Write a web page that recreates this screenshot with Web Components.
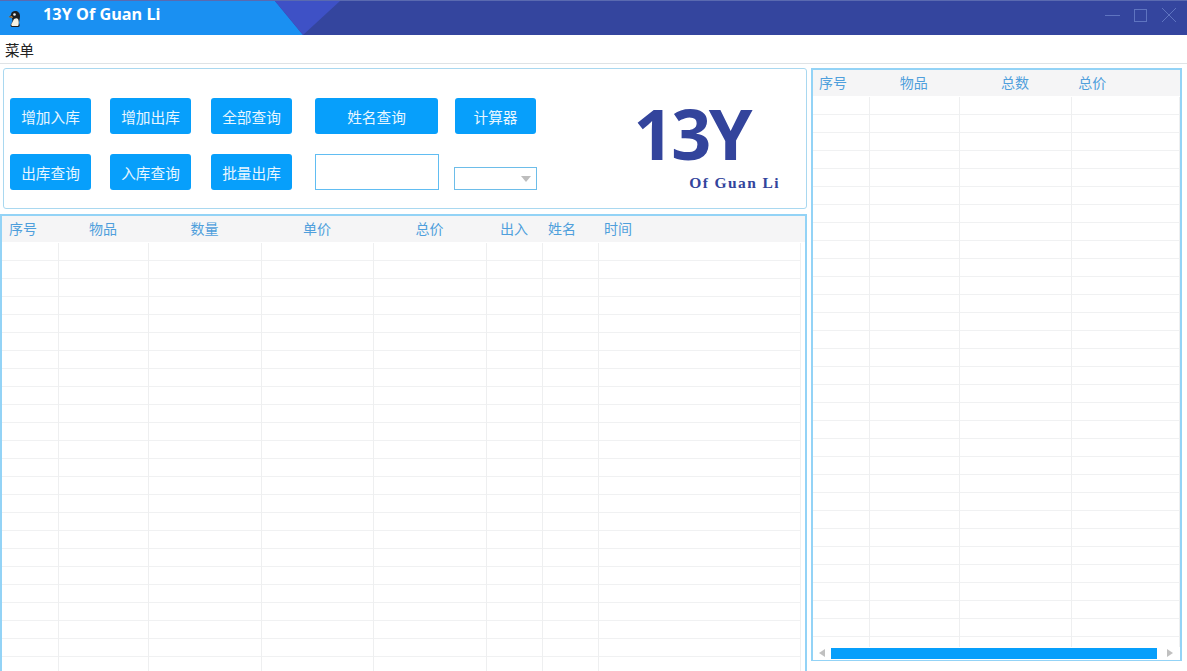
<!DOCTYPE html>
<html lang="zh"><head><meta charset="utf-8"><title>13Y Of Guan Li</title>
<style>
html,body{margin:0;padding:0;height:100%;overflow:hidden;background:#fff}
body{width:1187px;height:671px;font-family:"Noto Sans CJK SC","Noto Sans",sans-serif;display:flex;flex-direction:column}
.main{flex:1;display:flex;min-height:0;padding-top:4px;background:#fff}
.left{width:807px;height:603px;overflow:hidden;display:flex;flex-direction:column;gap:5px;margin-right:4px}
.right{width:371px;height:593px;border-bottom-width:1px}
.lg{flex:none;height:470px;border-bottom:0}
</style></head><body>
<title-bar></title-bar>
<menu-bar>菜单</menu-bar>
<div class="main">
  <div class="left">
    <tool-panel></tool-panel>
    <data-grid class="lg" cols="57:7,90:c,113:c,112:c,113:c,56:c,56:5,202:5" labels="序号,物品,数量,单价,总价,出入,姓名,时间" rows="24" fit></data-grid>
  </div>
  <data-grid class="right" cols="57:6,90:c,113:c,108:6" labels="序号,物品,总数,总价" rows="32" scroll></data-grid>
</div>
<script>
const def=(n,html,extra={})=>customElements.define(n,class extends HTMLElement{
  constructor(){super();this.attachShadow({mode:'open'}).innerHTML=html}
  connectedCallback(){extra.ready&&extra.ready.call(this)}
});
def('title-bar',`<style>
:host{display:flex;align-items:center;height:34px;border-top:1px solid #5a6ab0;box-sizing:content-box;background:#34459e;color:#fff;position:relative;overflow:hidden}
.bg{position:absolute;inset:0}
.ic{position:relative;width:14px;height:18px;margin:1px 0 0 8px}
.t{position:relative;margin-left:21px;font:700 16.300px/24px "Noto Sans",sans-serif;margin-top:-8px}
.w{position:absolute;right:10px;top:6px;display:flex;gap:13px}
svg{display:block}
</style>
<svg class="bg" width="1187" height="34"><polygon points="0,0 275,0 303,34 0,34" fill="#1a90f2"/><polygon points="275,0 340,0 303,34" fill="#3e51c6"/></svg>
<svg class="ic" viewBox="0 0 14 18"><path d="M3 5C3 2 5 1 7 1c3 0 5 2 5 5 0 3-1 5-1 7 1 2 1 4-1 4H4c-1 0-2-1-1-3 1-1 2-3 1-6L1 7z" fill="#1d2022"/><path d="M6 9c2-1 3-1 4 0 1 2 1 6 0 7H4c-1-1-1-2 0-3z" fill="#f4f2e4"/><circle cx="6.500" cy="4.500" r="1.300" fill="#eee"/><path d="M0 7l4-1 1 2z" fill="#c58b45"/></svg>
<span class="t">13Y Of Guan Li</span>
<div class="w">
<svg width="15" height="15" fill="none" stroke="#5f74c0"><path d="M0 8.500h15"/></svg>
<svg width="15" height="15" fill="none" stroke="#5f74c0"><rect x="1.500" y="2.500" width="12" height="12"/></svg>
<svg width="16" height="15" fill="none" stroke="#5f74c0"><path d="M1 1l14 14M15 1L1 15"/></svg>
</div>`);
def('menu-bar',`<style>:host{display:flex;align-items:center;height:27px;border-bottom:1px solid #dfe3e6;padding:1px 0 0 5px;font-size:14.500px;color:#222;box-sizing:content-box}</style><slot></slot>`);
def('tool-btn',`<style>:host{display:flex;align-items:center;justify-content:center;height:36px;background:#079ffb;color:#e8f6ff;border-radius:3px;font-size:14.670px}</style><slot></slot>`);
def('text-box',`<style>:host{display:block;box-sizing:border-box;height:36px;border:1px solid #61bdf2;background:#fff}</style>`);
def('combo-box',`<style>:host{display:flex;align-items:center;justify-content:flex-end;box-sizing:border-box;height:23px;border:1px solid #6dbde9;background:#fff;padding-right:5px}i{border:5px solid transparent;border-top:6px solid #bdbdbd;border-bottom:0}</style><i></i>`);
def('tool-panel',`<style>
:host{display:flex;flex:none;box-sizing:border-box;height:141px;margin-left:3px;border:1px solid #a9d8f0;border-radius:3px;background:#fff;padding-top:29px;padding-left:6px;position:relative}
.c{display:flex;flex-direction:column;gap:20px}
tool-btn{width:81px}
.logo{flex:1;display:flex;flex-direction:column;align-items:flex-end;color:#33449c}
.n{font:700 70px/60px "Noto Sans",sans-serif;letter-spacing:-2.500px;margin:5px 56px 0 0}
.s{font:700 15.500px/16px "Liberation Serif",serif;letter-spacing:1.400px;margin:12px 26px 0 0}
</style>
<div class="c"><tool-btn>增加入库</tool-btn><tool-btn>出库查询</tool-btn></div>
<div class="c" style="margin-left:19px"><tool-btn>增加出库</tool-btn><tool-btn>入库查询</tool-btn></div>
<div class="c" style="margin-left:20px"><tool-btn>全部查询</tool-btn><tool-btn>批量出库</tool-btn></div>
<div class="c" style="margin-left:23px;width:124px"><tool-btn style="width:123px">姓名查询</tool-btn><text-box></text-box></div>
<div class="c" style="margin-left:15px;width:83px"><tool-btn style="width:81px;margin-left:1px">计算器</tool-btn><combo-box style="margin-top:13px"></combo-box></div>
<div class="logo"><div class="n">13Y</div><div class="s">Of Guan Li</div></div>`);
def('data-grid',`<style>
:host{display:block;box-sizing:border-box;border:2px solid #93d3f6;background:#fff;overflow:hidden;position:relative;font-size:14px}
.h,.r{display:flex}
.h{height:26px;background:#f5f5f6;color:#4f9fdc;align-items:center}
.h div{box-sizing:border-box;white-space:nowrap;margin-top:-3px}
.b{padding-top:1px}
.r{height:18px;box-sizing:border-box;border-bottom:1px solid #f0f1f2}
:host([fit]) .r{width:max-content}
.r div{box-sizing:border-box;border-right:1px solid #eeeff0;height:18px}
.sb{position:absolute;left:0;right:0;bottom:0;height:13px;background:#fff}
.th{position:absolute;left:18px;width:326px;top:1px;height:11px;background:#079ffb}
.a{position:absolute;top:2px;border:solid transparent;border-width:4px 0}
</style><div class="h"></div><div class="b"></div>`,{ready(){
  const s=this.shadowRoot,cols=this.getAttribute('cols').split(',').map(x=>x.split(':')),labs=this.getAttribute('labels').split(',');
  const h=s.querySelector('.h'),b=s.querySelector('.b');
  cols.forEach((c,i)=>{const d=document.createElement('div');d.style.width=c[0]+'px';d.textContent=labs[i];if(c[1]==='c'){d.style.textAlign='center';d.style.paddingRight='2px'}else d.style.paddingLeft=c[1]+'px';h.append(d)});
  const n=+this.getAttribute('rows');
  for(let i=0;i<n;i++){const r=document.createElement('div');r.className='r';cols.forEach(c=>{const d=document.createElement('div');d.style.width=c[0]+'px';r.append(d)});b.append(r)}
  if(this.hasAttribute('scroll')){const sb=document.createElement('div');sb.className='sb';
    sb.innerHTML='<i class="a" style="left:6px;border-right:6px solid #c0c0c0"></i><div class="th"></div><i class="a" style="right:7px;border-left:6px solid #c0c0c0"></i>';s.append(sb)}
}});
</script>
</body></html>
